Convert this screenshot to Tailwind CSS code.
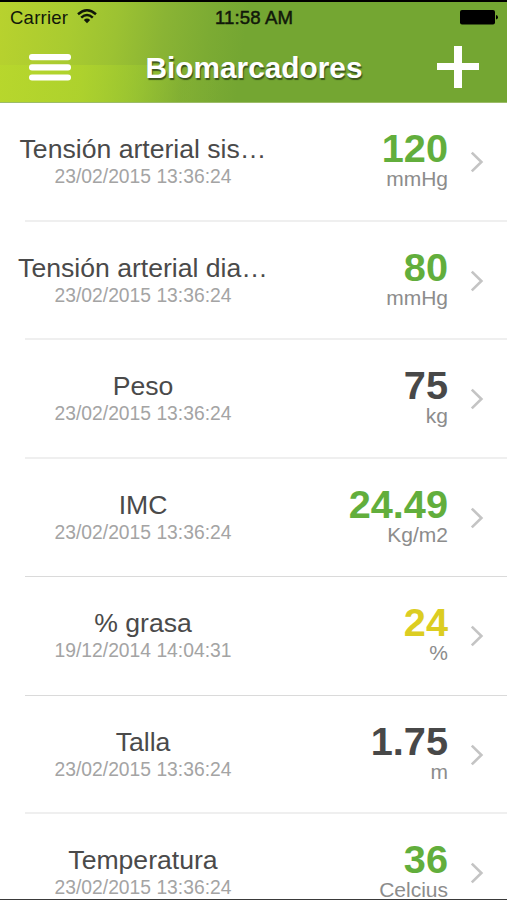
<!DOCTYPE html>
<html lang="es">
<head>
<meta charset="utf-8">
<title>Biomarcadores</title>
<script src="https://cdn.jsdelivr.net/npm/@tailwindcss/browser@4"></script>
</head>
<body class="bg-white">
<div class="relative flex h-[900px] w-[507px] flex-col overflow-hidden border-b border-[#3a3a3a] bg-white font-['Liberation_Sans',Arial,sans-serif]">
  <header class="relative h-[103px] shrink-0 border-t-2 border-b border-t-black border-b-[#9cbc68] bg-[linear-gradient(98deg,#b8d22e_0%,#a9cb30_14%,#9cc232_23%,#8ab434_32%,#7cab33_41%,#74a632_48%,#74a632_100%)]">
    <div class="absolute bottom-0 left-0 h-[37px] w-[230px] bg-[linear-gradient(98deg,#b8d82ccc_0%,#b0d42ccc_35%,#9cc830a0_60%,#82b03260_78%,#74a63200_95%)]"></div>
    <div class="relative grid h-[32px] grid-cols-[1fr_auto_1fr] items-center pr-[9px] pl-[10px] text-[18px] leading-[32px] text-[#11180a]">
      <div class="flex items-center gap-[9px]">
        <span class="text-[18.5px] tracking-[0.25px]">Carrier</span>
        <svg class="-mt-1 h-[15px] w-[20px]" viewBox="0 0 20 15" fill="none" stroke="#11180a" stroke-width="2.5"><path d="M1 5.2Q10-2.6 19 5.2M4.2 8.6Q10 3.3 15.8 8.6"/><path d="M6.8 11Q10 8.2 13.2 11L10 14.3Z" fill="#11180a" stroke="none"/></svg>
      </div>
      <span class="text-[18.6px] tracking-[0.1px] [-webkit-text-stroke:0.5px_#11180a]">11:58 AM</span>
      <svg class="-mt-0.5 h-[15px] w-[38px] justify-self-end" viewBox="0 0 38 15"><rect width="35" height="14.5" rx="2" fill="#000"/><path d="M36 5Q38 5.4 38 7.3T36 9.6Z" fill="#000"/></svg>
    </div>
    <div class="relative flex h-[66px] items-center justify-between pr-[28px] pl-[29px]">
      <svg class="h-[27px] w-[42px]" viewBox="0 0 42 27" fill="#fff"><rect width="42" height="6.2" rx="3"/><rect y="10.2" width="42" height="6.2" rx="3"/><rect y="20.4" width="42" height="6.2" rx="3"/></svg>
      <h1 class="pt-px text-[29.8px] leading-none font-bold text-white [text-shadow:1px_2px_1px_#2c4016cc]">Biomarcadores</h1>
      <svg class="h-[42px] w-[42px]" viewBox="0 0 42 42" fill="#fff"><path d="M17 0h8v17h17v7H25v18h-8V24H0v-7h17Z"/></svg>
    </div>
  </header>
  <main id="list" class="flex flex-col"></main>
</div>
<template id="row">
  <section class="relative flex h-[118.55px] shrink-0 items-start pt-[31px]">
    <div class="w-[286px] text-center">
      <div data-f="name" class="text-[26.6px] leading-[30px] whitespace-nowrap text-[#4a4a4a]"></div>
      <div data-f="date" class="text-[19.3px] leading-[26px] whitespace-nowrap text-[#a4a4a4]"></div>
    </div>
    <div class="w-[162px] text-right">
      <div data-f="value" class="-mt-px text-[39.7px] leading-[30px] font-bold"></div>
      <div data-f="unit" class="mt-px text-[21px] leading-[30px] text-[#8c8c8c]"></div>
    </div>
    <svg class="mt-[17px] ml-[22px] h-[22px] w-[14px]" viewBox="0 0 14 22" fill="none" stroke="#c4c4c4" stroke-width="2.6"><path d="M1.8 1.6 11.4 11 1.8 20.4"/></svg>
    <div data-f="line" class="absolute right-0 bottom-0 left-[25px]"></div>
  </section>
</template>
<script>
const soft = ['h-[2px]', 'bg-[#efefef]'];
const crisp = ['h-px', 'bg-[#dadada]'];
const rows = [
  ['Tensión arterial sis…', '23/02/2015 13:36:24', '120', 'mmHg', '#62ae3c', soft],
  ['Tensión arterial dia…', '23/02/2015 13:36:24', '80', 'mmHg', '#62ae3c', soft],
  ['Peso', '23/02/2015 13:36:24', '75', 'kg', '#484848', soft],
  ['IMC', '23/02/2015 13:36:24', '24.49', 'Kg/m2', '#62ae3c', crisp],
  ['% grasa', '19/12/2014 14:04:31', '24', '%', '#dccd22', crisp],
  ['Talla', '23/02/2015 13:36:24', '1.75', 'm', '#484848', soft],
  ['Temperatura', '23/02/2015 13:36:24', '36', 'Celcius', '#62ae3c', crisp]
];
const list = document.getElementById('list');
const tpl = document.getElementById('row');
for (const r of rows) {
  const n = tpl.content.cloneNode(true);
  ['name', 'date', 'value', 'unit'].forEach((f, i) => { n.querySelector(`[data-f=${f}]`).textContent = r[i]; });
  n.querySelector('[data-f=value]').style.color = r[4];
  n.querySelector('[data-f=line]').classList.add(...r[5]);
  list.appendChild(n);
}
</script>
</body>
</html>
